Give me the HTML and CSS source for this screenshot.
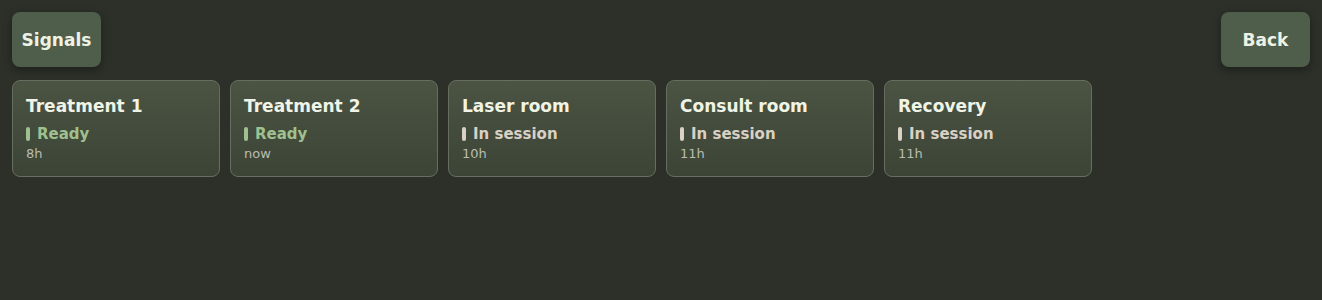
FILE: index.html
```html
<!DOCTYPE html>
<html lang="en">
<head>
    <meta charset="UTF-8">
    <meta name="viewport" content="width=device-width, initial-scale=1.0">
    <title>Signals</title>
    <link rel="stylesheet" href="styles.css">
</head>
<body>
    <div class="topbar">
        <button class="btn">Signals</button>
        <button class="btn">Back</button>
    </div>

    <div class="rooms">
        <div class="room">
            <div class="room-name">Treatment 1</div>
            <div class="room-status status-ready"><span class="bar"></span>Ready</div>
            <div class="room-time">8h</div>
        </div>
        <div class="room">
            <div class="room-name">Treatment 2</div>
            <div class="room-status status-ready"><span class="bar"></span>Ready</div>
            <div class="room-time">now</div>
        </div>
        <div class="room">
            <div class="room-name">Laser room</div>
            <div class="room-status status-busy"><span class="bar"></span>In session</div>
            <div class="room-time">10h</div>
        </div>
        <div class="room">
            <div class="room-name">Consult room</div>
            <div class="room-status status-busy"><span class="bar"></span>In session</div>
            <div class="room-time">11h</div>
        </div>
        <div class="room">
            <div class="room-name">Recovery</div>
            <div class="room-status status-busy"><span class="bar"></span>In session</div>
            <div class="room-time">11h</div>
        </div>
    </div>
</body>
</html>
```

FILE: styles.css
```css
body { margin: 0; padding: 12px; background: #2c3029; font-family: "DejaVu Sans", sans-serif; color: #eef2e4; }
.topbar { display: flex; justify-content: space-between; align-items: flex-start; }
.btn { min-width: 89px; height: 55px; padding: 0 9px; border: none; border-radius: 8px; background: #4f5e4a; color: #eef2e4; font-family: "DejaVu Sans", sans-serif; font-size: 17px; font-weight: bold; box-shadow: 0 3px 8px rgba(0, 0, 0, 0.35); cursor: pointer; }
.rooms { display: flex; gap: 10px; margin-top: 13px; }
.room { width: 208px; height: 97px; box-sizing: border-box; padding: 13px 13px; border: 1px solid #676e61; border-radius: 8px; background: linear-gradient(#4b5443, #3c4436); }
.room-name { font-size: 17px; font-weight: bold; line-height: 24px; color: #f0f4e6; }
.room-status { display: flex; align-items: center; gap: 7px; margin-top: 7px; font-size: 15px; font-weight: bold; line-height: 18px; }
.room-status .bar { width: 4px; height: 14px; border-radius: 2px; background: currentColor; }
.status-ready { color: #9fc08f; }
.status-busy { color: #d9d1c5; }
.room-time { margin-top: 2px; font-size: 13px; line-height: 18px; color: #b9bdb1; }
```
